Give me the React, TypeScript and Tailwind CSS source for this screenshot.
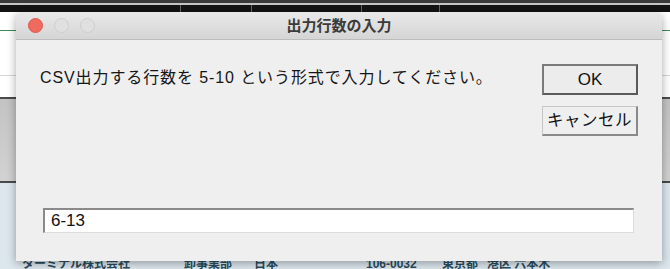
import React from 'react';

const FONT = { fontFamily: '"Liberation Sans", "Noto Sans CJK JP", sans-serif' };

function TrafficLights() {
  return (
    <div className="absolute left-[12px] top-[6px] flex gap-[11px]">
      <span className="w-[15px] h-[15px] rounded-full bg-[#ef6b5f] border border-[#dd574c]" />
      <span className="w-[15px] h-[15px] rounded-full bg-[#e0e0e0] border border-[#cdcdcd]" />
      <span className="w-[15px] h-[15px] rounded-full bg-[#e0e0e0] border border-[#cdcdcd]" />
    </div>
  );
}

function BackgroundSheet() {
  return (
    <div className="flex flex-col w-full h-full">
      <div className="h-[3px] bg-[#3a3a3a]" />
      <div className="h-[2px] bg-[#c4c4c4]" />
      <div className="h-[7px] bg-[#131313] flex">
        <div className="w-[181px] border-r border-[#666]" />
        <div className="w-[71px] border-r border-[#666]" />
        <div className="w-[110px] border-r border-[#666]" />
        <div className="w-[78px] border-r border-[#666]" />
      </div>
      <div className="h-[19px] bg-white border-b border-[#3f8a55]" />
      <div className="h-[45px] bg-white border-b border-[#d6d6d6]" />
      <div className="h-[23px] bg-white border-b-2 border-[#4a4a4a]" />
      <div className="h-[84px] bg-gradient-to-b from-[#c3c3c3] to-[#d2d2d2] border-b-2 border-[#4a4a4a]" />
      <div className="flex-1 bg-[#dce6ed] relative">
        <div className="absolute left-0 top-[74px] flex text-[12px] font-bold leading-[14px] text-[#2b4c5d] whitespace-nowrap">
          <span className="ml-[22px] w-[162px]">ターミナル株式会社</span>
          <span className="w-[70px]">卸事業部</span>
          <span className="w-[112px]">日本</span>
          <span className="w-[76px]">106-0032</span>
          <span className="w-[45px]">東京都</span>
          <span>港区 六本木</span>
        </div>
      </div>
    </div>
  );
}

export default function App() {
  return (
    <div className="relative w-[670px] h-[269px] overflow-hidden" style={FONT}>
      <BackgroundSheet />

      <div className="absolute left-[16px] top-[12px] w-[646px] h-[249px] rounded-t-[7px] bg-[#efefef] shadow-[0_2px_10px_rgba(0,0,0,0.35)] flex flex-col overflow-hidden">
        <div className="relative h-[28px] bg-gradient-to-b from-[#e9e9e9] to-[#d5d5d5] border-b border-[#bcbcbc] flex items-center justify-center shrink-0">
          <TrafficLights />
          <span className="text-[15px] font-bold text-[#3b3b3b] leading-none">出力行数の入力</span>
        </div>

        <div className="flex pl-[24px] pr-[24px] pt-[24px]">
          <p className="flex-1 pt-[4px] text-[16px] leading-[20px] text-[#161616] tracking-[0.9px]">
            CSV出力する行数を 5-10 という形式で入力してください。
          </p>
          <div className="flex flex-col gap-[11px] w-[96px]">
            <button className="h-[31px] bg-[#ececec] border-2 border-[#7a7a7a] border-r-[#5a5a5a] border-b-[#5a5a5a] text-[17px] text-[#111] leading-none">
              OK
            </button>
            <button className="h-[30px] bg-[#efefef] border-t border-l border-[#c6c6c6] border-r-2 border-b-2 border-r-[#8a8a8a] border-b-[#8a8a8a] text-[16.5px] text-[#111] leading-none tracking-[0.5px]">
              キャンセル
            </button>
          </div>
        </div>

        <div className="mt-auto mb-[28px] ml-[27px] w-[591px] h-[25px] bg-white border-t-2 border-l-2 border-[#8a8a8a] border-r border-b border-r-[#dcdcdc] border-b-[#dcdcdc] flex items-center pl-[6px] text-[17px] text-[#111]">
          6-13
        </div>
      </div>
    </div>
  );
}
